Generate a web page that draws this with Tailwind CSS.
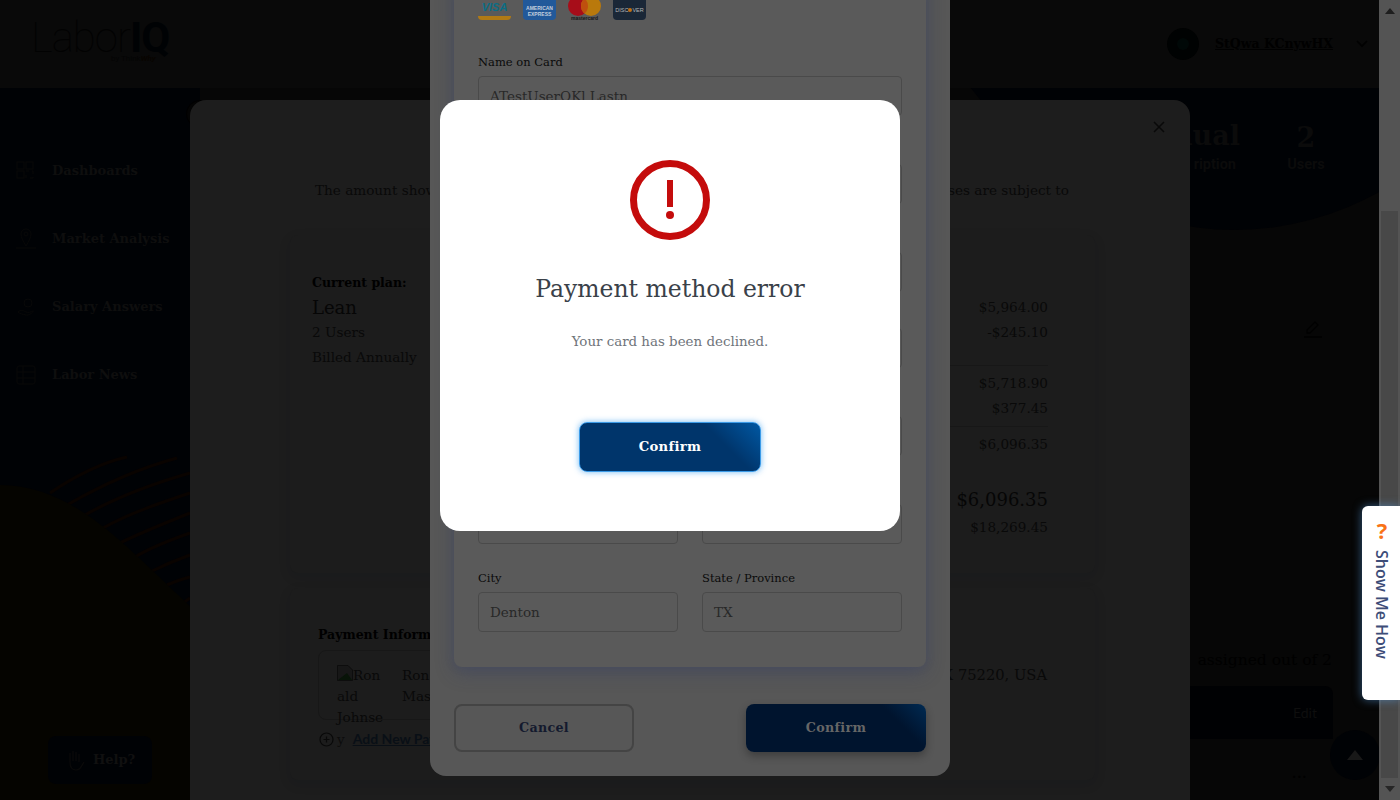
<!DOCTYPE html>
<html lang="en">
<head>
<meta charset="utf-8">
<title>Payment method error</title>
<script src="https://cdn.jsdelivr.net/npm/@tailwindcss/browser@4"></script>
</head>
<body class="bg-[#060606]">
<div class="relative w-[1400px] h-[800px] overflow-hidden flex [font-family:'DejaVu_Serif',serif]">

  <!-- dimmed page -->
  <div class="relative w-[1379px] h-[800px] flex flex-col bg-[#060606]">
    <header class="h-[88px] bg-[#090909] flex items-center justify-between shrink-0">
      <div class="ml-[31px] mt-[2px] relative h-[50px] w-[140px]">
        <div class="[font-family:Roboto,sans-serif] text-[42px] leading-[35px] font-thin text-[#020202] tracking-[-1px] whitespace-nowrap">Labor<span class="font-bold text-[#000204]">IQ</span></div>
        <div class="absolute left-[80px] top-[35px] [font-family:Roboto,sans-serif] text-[8px] leading-[8px] text-[#040404] whitespace-nowrap">by Think<span class="text-[#080400] italic font-bold">Why</span></div>
      </div>
      <div class="flex items-center mr-[11px]">
        <div class="w-8 h-8 rounded-full bg-[#000202] flex items-center justify-center">
          <div class="w-3 h-3 rounded-full bg-[#000807]"></div>
        </div>
        <span class="ml-4 text-[12.500px] underline text-black font-semibold">StQwa KCnywHX</span>
        <svg class="ml-[23px]" width="12" height="8" viewBox="0 0 12 8" fill="none"><path d="M1 1l5 5 5-5" stroke="#010101" stroke-width="1.6"/></svg>
      </div>
    </header>
    <div class="flex-1 flex min-h-0">
      <aside class="relative w-[200px] h-[712px] bg-[#000205] overflow-hidden">
        <svg class="absolute inset-0" width="200" height="712" viewBox="0 0 200 712" fill="none">
          <g stroke="#090300" stroke-width="3">
            <path d="M50 405C75 388 100 375 127 369"/>
            <path d="M67 417C100 398 140 380 177 370"/>
            <path d="M85 427C115 410 155 395 190 385"/>
            <path d="M103 440C130 425 160 415 190 405"/>
            <path d="M120 455C140 445 165 435 190 425"/>
            <path d="M135 469C150 460 170 452 190 445"/>
            <path d="M150 484C162 478 176 472 190 467"/>
            <path d="M167 497C174 494 182 491 190 489"/>
            <path d="M183 515L190 510"/>
          </g>
          <path d="M0 397C80 397 135 470 200 527V712H0Z" fill="#050400"/>
        </svg>
        <nav class="relative flex flex-col pt-[66px] pl-4 gap-[34px]">
          <div class="flex items-center h-[34px] gap-[16px]">
            <svg width="20" height="20" viewBox="0 0 20 20" fill="none" stroke="#080808" stroke-width="1"><rect x="1" y="1" width="7" height="7"/><rect x="10" y="1" width="7" height="7"/><rect x="1" y="10" width="7" height="7"/><path d="M10 10h3M16 10h1v3M17 16v1h-3M10 17v-3"/></svg>
            <span class="text-[13px] font-bold text-[#0e0e0e]">Dashboards</span>
          </div>
          <div class="flex items-center h-[34px] gap-[16px]">
            <svg width="20" height="22" viewBox="0 0 20 22" fill="none" stroke="#080808" stroke-width="1"><path d="M10 18C7 13 5 9 5 6a5 5 0 0 1 10 0c0 3-2 7-5 12z"/><circle cx="10" cy="6" r="2"/><path d="M0 20h20"/></svg>
            <span class="text-[13px] font-bold text-[#0e0e0e]">Market Analysis</span>
          </div>
          <div class="flex items-center h-[34px] gap-[16px]">
            <svg width="20" height="20" viewBox="0 0 20 20" fill="none" stroke="#080808" stroke-width="1"><circle cx="12" cy="6" r="4"/><path d="M2 15c3-3 6-1 8 0s5 0 7-1-3 5-7 4-6-1-8-3z"/></svg>
            <span class="text-[13px] font-bold text-[#0e0e0e]">Salary Answers</span>
          </div>
          <div class="flex items-center h-[34px] gap-[16px]">
            <svg width="20" height="20" viewBox="0 0 20 20" fill="none" stroke="#080808" stroke-width="1"><rect x="1" y="1" width="18" height="18" rx="2"/><path d="M1 7h18M1 13h18M7 1v18"/></svg>
            <span class="text-[13px] font-bold text-[#0e0e0e]">Labor News</span>
          </div>
        </nav>
        <div class="absolute left-[48px] top-[648px] w-[104px] h-[48px] rounded-lg bg-[#000205] flex items-center justify-center gap-2">
          <svg width="20" height="22" viewBox="0 0 20 22" fill="none" stroke="#0a0a0a" stroke-width="1.2"><path d="M5 13V4M8 12V2M11 12V3M14 13V5M5 13c0 5 2 8 6 8s5-3 8-8"/></svg>
          <span class="text-[13px] font-bold text-[#101010]">Help?</span>
        </div>
      </aside>
      <main class="relative flex-1 bg-[#060606] overflow-hidden">
        <div class="absolute left-[647px] -top-[918px] w-[776px] h-[1060px] rounded-[50%] bg-[#000205]"></div>
        <div class="absolute left-[960px] top-[30px] text-[27px] leading-[36px] font-bold text-[#0b0b0b] w-[80px] text-right">nual</div>
        <div class="absolute left-[960px] top-[67px] text-[14.500px] leading-[20px] font-bold text-[#0b0b0b] w-[76px] text-right [font-family:Roboto,sans-serif]">ription</div>
        <div class="absolute left-[1076px] top-[32px] w-[60px] text-center text-[27px] leading-[36px] font-bold text-[#0b0b0b]">2</div>
        <div class="absolute left-[1076px] top-[67px] w-[60px] text-center text-[14.500px] leading-[20px] font-bold text-[#0b0b0b] [font-family:Roboto,sans-serif]">Users</div>
        <svg class="absolute left-[1103px] top-[231px]" width="20" height="20" viewBox="0 0 20 20" fill="none" stroke="#000" stroke-width="1.3"><path d="M4 14V11L12 3l3 3-8 8zM1 18h18"/></svg>
        <div class="absolute left-[998px] top-[560px] w-[134px] flex justify-end text-[15.500px] leading-[24px] text-black whitespace-nowrap">assigned out of 2</div>
        <div class="absolute left-[900px] top-[598px] w-[233px] h-[53px] rounded-tr-lg bg-[#000103] flex items-center justify-end pr-[16px] text-[14px] [font-family:Lato,sans-serif] text-[#0e0e0e]">Edit</div>
        <div class="absolute left-[1092px] top-[680px] w-[16px] text-[12px] leading-[12px] text-black font-bold tracking-[1px]">...</div>
      </main>
    </div>
    <div class="absolute left-[186px] top-[100px] w-7 h-7 rounded-full bg-[#040404] border border-[#000]"></div>
    <div class="absolute left-[1330px] top-[730px] w-[50px] h-[50px] rounded-full bg-[#000205] flex items-center justify-center">
      <svg width="16" height="10" viewBox="0 0 16 10"><path d="M8 0l8 10H0z" fill="#181818"/></svg>
    </div>
  </div>

  <!-- dimmed scrollbar -->
  <div class="relative w-[21px] h-[800px] bg-[#545454] flex flex-col items-center justify-between py-[8px]">
    <svg width="10" height="6" viewBox="0 0 10 6"><path d="M5 0l5 6H0z" fill="#1e1e1e"/></svg>
    <svg width="10" height="6" viewBox="0 0 10 6"><path d="M5 6L0 0h10z" fill="#262626"/></svg>
    <div class="absolute left-[2px] top-[211px] w-[17px] h-[567px] bg-[#484848]"></div>
  </div>

  <!-- first dialog: subscription summary -->
  <section class="absolute left-[190px] top-[100px] w-[1000px] h-[700px] rounded-t-[16px] bg-[#1d1d1d]">
    <svg class="absolute left-[963px] top-[21px]" width="12" height="12" viewBox="0 0 12 12" fill="none"><path d="M1 1l10 10M11 1L1 11" stroke="#090909" stroke-width="1.5"/></svg>
    <div class="pt-[78px] ml-[125px] mr-[121px] flex justify-between text-[13.600px] leading-[24px] text-[#090909] whitespace-nowrap"><span>The amount shown</span><span>purchases are subject to</span></div>
    <div class="ml-[100px] w-[805px] mt-[33px] h-[338px] rounded-lg bg-[#1c1c1c] shadow-[0_4px_12px_rgba(10,15,30,0.14)] flex justify-between pl-[22px] pr-[47px] pt-[35px] text-[13.600px] leading-[25px] text-[#090909]">
      <div>
        <div class="text-[12.500px] font-bold text-[#000]">Current plan:</div>
        <div class="text-[18px] text-[#060606]">Lean</div>
        <div>2 Users</div>
        <div>Billed Annually</div>
      </div>
      <div class="w-[200px] text-right">
        <div class="mt-[25px]">$5,964.00</div>
        <div class="pb-[20px] border-b border-[#171717]">-$245.10</div>
        <div class="mt-[5px]">$5,718.90</div>
        <div class="pb-[5px] border-b border-[#171717]">$377.45</div>
        <div class="mt-[5px]">$6,096.35</div>
        <div class="mt-[28px] text-[18px] leading-[30px] text-[#060606]">$6,096.35</div>
        <div>$18,269.45</div>
      </div>
    </div>
    <div class="relative ml-[100px] w-[805px] mt-[15px] h-[192px] rounded-lg bg-[#1c1c1c] shadow-[0_4px_12px_rgba(10,15,30,0.14)] pl-[28px] pt-[37px] text-[13.600px] text-[#090909]">
      <div class="text-[12.500px] font-bold leading-[20px] text-black">Payment Information</div>
      <div class="mt-[5px] w-[300px] h-[70px] rounded-lg border border-[#171717] flex pl-[18px] pt-[14px] leading-[21px]">
        <div class="w-[65px]">
          <div class="flex"><svg width="16" height="16" viewBox="0 0 16 16" fill="none"><path d="M.5.5H11L15.500 5V15.500H.5z" fill="#171717" stroke="#0d0d0d"/><path d="M1 15l9-7 5 7z" fill="#081408"/></svg><span>Ron</span></div>
          <div>ald</div>
          <div>Johnse</div>
        </div>
        <div><div>Ron</div><div>Mas</div></div>
      </div>
      <div class="mt-[9px] flex items-center leading-[20px]">
        <svg class="ml-[1px]" width="15" height="15" viewBox="0 0 15 15" fill="none" stroke="#090909" stroke-width="1.2"><circle cx="7.500" cy="7.500" r="6.500"/><path d="M7.500 4.500v6M4.500 7.500h6"/></svg>
        <span class="ml-[3px] text-[#0c0c0c]">y</span>
        <span class="ml-[8px] underline font-bold text-[14px] text-[#090f16] [font-family:Lato,sans-serif]">Add New Payment</span>
      </div>
      <div class="absolute right-[48px] top-[75px] text-[14.700px] leading-[24px] text-[#090909]">TX 75220, USA</div>
    </div>
  </section>

  <!-- second dialog: card form -->
  <section class="absolute left-[430px] bottom-[24px] w-[520px] rounded-b-[16px] bg-[#575757] px-[24px] pb-[24px]">
    <div class="h-[691px] rounded-b-lg bg-[#5a5a5a] shadow-[0_6px_18px_rgba(50,60,100,0.4),0_0_10px_rgba(60,70,110,0.2)] px-[24px] pt-[20px] flex flex-col">
      <div class="flex gap-[12px] h-[24px] shrink-0">
        <div class="relative w-[33px] h-[24px] rounded-sm bg-[#5a5a5a] border-t-[3px] border-b-[4px] border-t-[#0b6d85] border-b-[#b07a15] flex items-center justify-center">
          <span class="[font-family:'Liberation_Sans',sans-serif] italic font-bold text-[11px] text-[#0b6d85]">VISA</span>
        </div>
        <div class="w-[33px] h-[24px] rounded-sm bg-[#22599a] flex flex-col items-center justify-center pt-[6px] [font-family:'Liberation_Sans',sans-serif] font-bold text-[5px] leading-[6px] text-[#c3cfdd]"><span>AMERICAN</span><span>EXPRESS</span></div>
        <div class="relative w-[33px] h-[24px]">
          <svg width="33" height="20" viewBox="0 0 33 20"><circle cx="10" cy="10" r="10" fill="#a70d19"/><circle cx="23" cy="10" r="10" fill="#b9790c"/><path d="M16.500 2.400a10 10 0 0 1 0 15.200a10 10 0 0 1 0-15.200z" fill="#bf4f0e"/></svg>
          <div class="absolute left-0 right-0 top-[20px] text-center [font-family:'Liberation_Sans',sans-serif] text-[5px] leading-[5px] font-bold text-[#161616]">mastercard</div>
        </div>
        <div class="w-[33px] h-[24px] rounded-sm bg-[#1a2737] flex items-center justify-center pt-[4px] [font-family:'Liberation_Sans',sans-serif] text-[5.500px] text-[#b4b4b4]">DISC<span class="w-[4px] h-[4px] rounded-full bg-[#c07014]"></span>VER</div>
      </div>
      <div class="mt-[32px] h-[64px] shrink-0">
        <div class="text-[11.500px] leading-[20px] mb-[4px] text-[#0a0a0a]">Name on Card</div>
        <div class="h-[40px] rounded border border-[#4a4a4a] pl-[11px] flex items-center text-[13.500px] text-[#282828]">ATestUserOKl Lastn</div>
      </div>
      <div class="mt-[24px] h-[64px] shrink-0 pt-[24px]"><div class="h-[40px] rounded border border-[#4a4a4a]"></div></div>
      <div class="mt-[24px] h-[64px] shrink-0 pt-[24px]"><div class="h-[40px] rounded border border-[#4a4a4a]"></div></div>
      <div class="mt-[12px] h-[64px] shrink-0 pt-[24px]"><div class="h-[40px] rounded border border-[#4a4a4a]"></div></div>
      <div class="mt-[24px] h-[64px] shrink-0 pt-[24px]"><div class="h-[40px] rounded border border-[#4a4a4a]"></div></div>
      <div class="mt-[24px] h-[64px] shrink-0 pt-[24px] flex gap-[24px]"><div class="flex-1 h-[40px] rounded border border-[#4a4a4a]"></div><div class="flex-1 h-[40px] rounded border border-[#4a4a4a]"></div></div>
      <div class="mt-[24px] h-[64px] shrink-0 flex gap-[24px]">
        <div class="flex-1">
          <div class="text-[11.500px] leading-[20px] mb-[4px] text-[#0a0a0a]">City</div>
          <div class="h-[40px] rounded border border-[#4a4a4a] pl-[11px] flex items-center text-[13.500px] text-[#282828]">Denton</div>
        </div>
        <div class="flex-1">
          <div class="text-[11.500px] leading-[20px] mb-[4px] text-[#0a0a0a]">State / Province</div>
          <div class="h-[40px] rounded border border-[#4a4a4a] pl-[11px] flex items-center text-[13.500px] text-[#282828]">TX</div>
        </div>
      </div>
    </div>
    <div class="mt-[37px] flex justify-between">
      <div class="w-[180px] h-[48px] rounded-lg border-2 border-[#444] flex items-center justify-center text-[12.700px] font-bold tracking-[0.3px] text-[#141a2e]">Cancel</div>
      <div class="w-[180px] h-[48px] rounded-lg bg-[linear-gradient(45deg,#00142e_80%,#002a52_100%)] shadow-[0_4px_8px_rgba(0,0,0,0.3)] flex items-center justify-center text-[12.700px] font-bold tracking-[0.3px] text-[#666]">Confirm</div>
    </div>
  </section>

  <!-- error dialog -->
  <section class="absolute left-[440px] top-[100px] w-[460px] h-[431px] rounded-[20px] bg-white flex flex-col items-center pt-[60px]">
    <svg width="80" height="80" viewBox="0 0 80 80" fill="none">
      <circle cx="40" cy="40" r="36.500" stroke="#c40c0c" stroke-width="7"/>
      <path d="M40 20v27" stroke="#c40c0c" stroke-width="6"/>
      <circle cx="40" cy="55" r="4" fill="#c40c0c"/>
    </svg>
    <h1 class="mt-[31px] text-[23.500px] leading-[36px] text-[#3a4149] whitespace-nowrap">Payment method error</h1>
    <p class="mt-[25px] text-[13.400px] leading-[20px] text-[#6f747a] whitespace-nowrap">Your card has been declined.</p>
    <div class="mt-[70px] w-[182px] h-[50px] rounded-[8px] border border-[#3b9be8] bg-[linear-gradient(45deg,#00356b_75%,#0058a3_100%)] shadow-[0_0_6px_rgba(80,170,240,0.8)] flex items-center justify-center text-[13.200px] font-bold tracking-[0.3px] text-white">Confirm</div>
  </section>

  <!-- help tab -->
  <aside class="absolute left-[1362px] top-[506px] w-[38px] h-[194px] rounded-l-md bg-white shadow-[0_0_10px_rgba(90,160,230,0.55)] flex flex-col items-center pt-[12px] pl-[2px]">
    <span class="[font-family:'Open_Sans',sans-serif] font-bold text-[22px] leading-[24px] text-[#f97316]">?</span>
    <span class="mt-[8px] [writing-mode:vertical-rl] [font-family:'Open_Sans',sans-serif] font-semibold text-[16px] leading-[20px] text-[#3d4d78] whitespace-nowrap">Show Me How</span>
  </aside>
</div>
</body>
</html>
